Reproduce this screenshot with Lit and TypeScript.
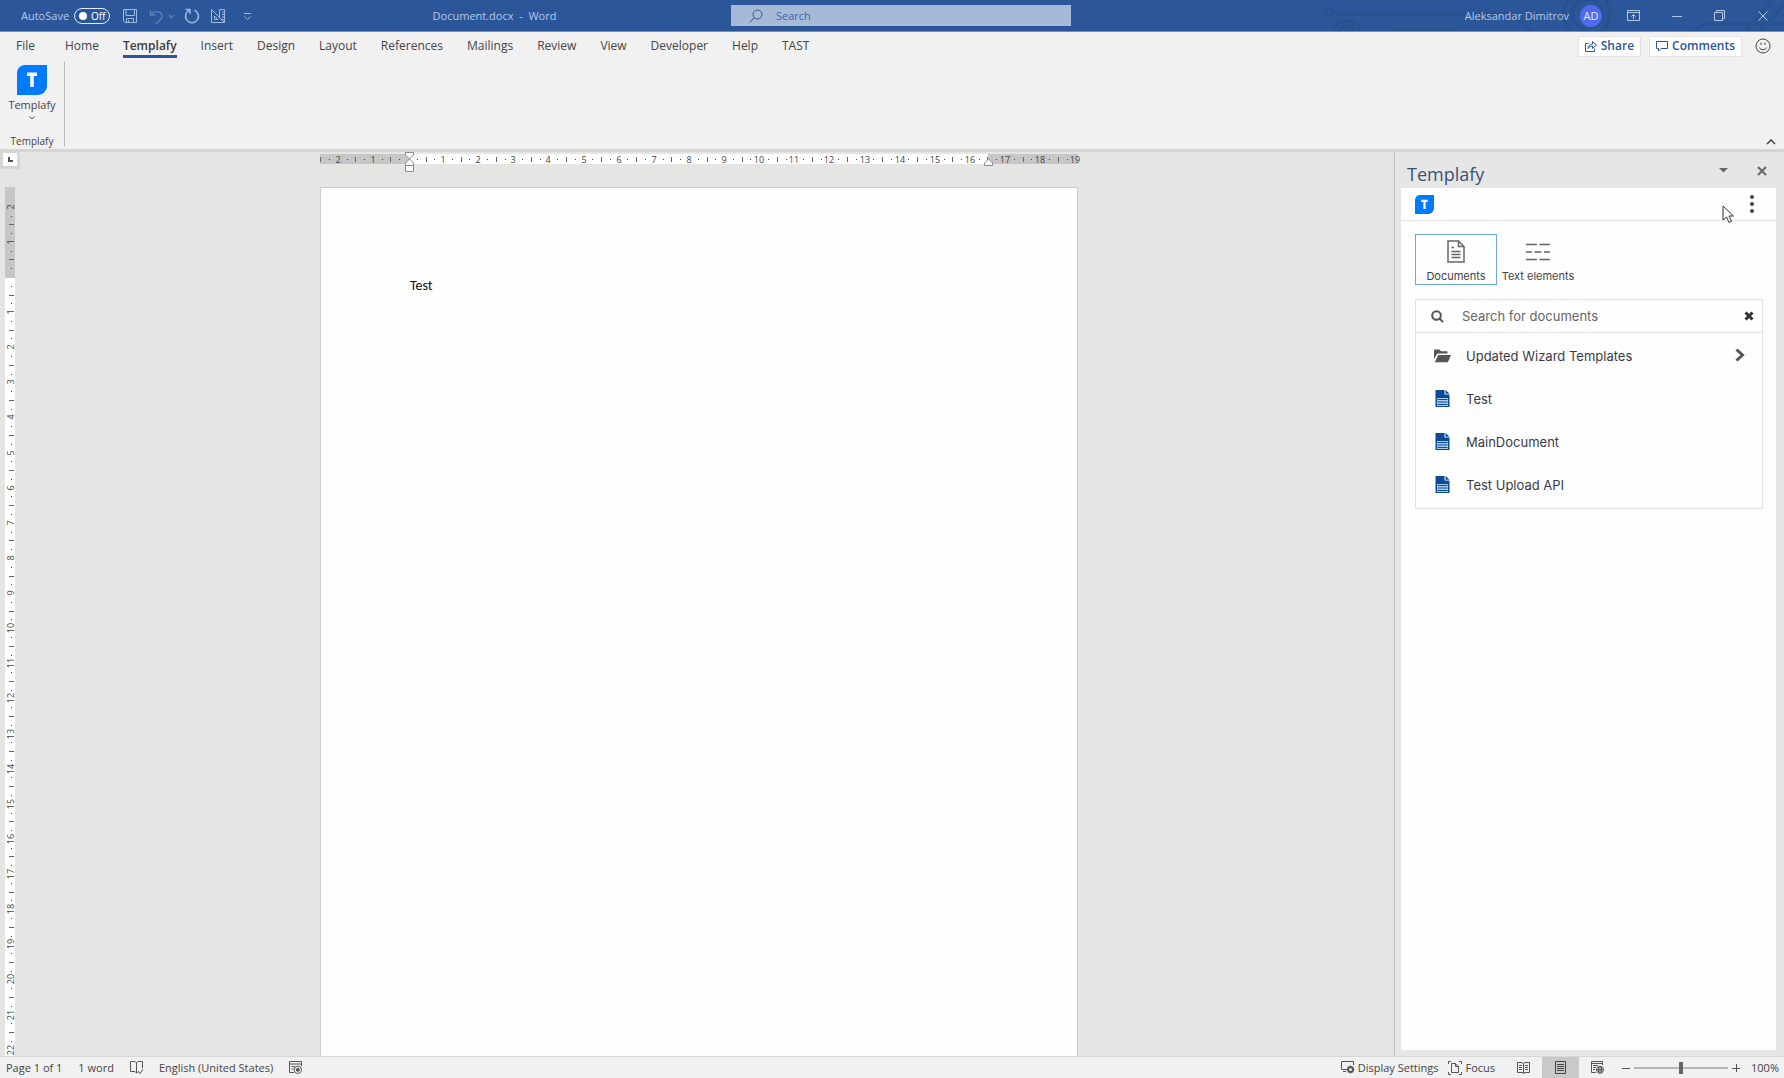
import { LitElement, html, css, svg } from "lit";
import { customElement, state } from "lit/decorators.js";
import { classMap } from "lit/directives/class-map.js";

const TABS = [
  "File", "Home", "Templafy", "Insert", "Design", "Layout", "References",
  "Mailings", "Review", "View", "Developer", "Help", "TAST",
];

const DOCUMENTS = ["Test", "MainDocument", "Test Upload API"];

/* Pixels per centimetre on both rulers at 100% zoom. */
const CM = 35.12;

const quarterMarks = (from: number, to: number) => {
  const marks: { at: number; kind: "number" | "half" | "dot"; label: number }[] = [];
  for (let q = from; q <= to; q++) {
    if (q === 0) continue;
    const kind = q % 4 === 0 ? "number" : q % 2 === 0 ? "half" : "dot";
    marks.push({ at: Math.round((q * CM) / 4), kind, label: Math.abs(q / 4) });
  }
  return marks;
};

const logo = (size: number) => svg`
  <svg width=${size} height=${size} viewBox="0 0 30 30" aria-hidden="true">
    <path d="M8 0H30V21A9 9 0 0 1 21 30H0V8A8 8 0 0 1 8 0Z" fill="#007bff"/>
    <path d="M10 9.200H20M15 9.200V22" stroke="#fff" stroke-width="3.600" fill="none"/>
  </svg>`;

@customElement("app-root")
export class AppRoot extends LitElement {
  @state() private activeTab = "Templafy";
  @state() private section = "Documents";

  static styles = css`
    :host {
      display: flex;
      flex-direction: column;
      height: 100vh;
      overflow: hidden;
      background: #e5e5e4;
      color: #444;
      font: 12px/16px "Open Sans", "Noto Sans", sans-serif;
    }
    * { box-sizing: border-box; }
    button, input {
      font: inherit;
      color: inherit;
      border: 0;
      margin: 0;
      padding: 0;
      background: none;
    }
    svg { display: block; fill: none; flex: none; }
    h1, h2, p, ul { margin: 0; padding: 0; font-weight: 400; list-style: none; }

    /* Title bar */
    .titlebar {
      position: relative;
      display: grid;
      grid-template-columns: 1fr 340px 1fr;
      align-items: center;
      height: 32px;
      padding-left: 18px;
      flex: none;
      background: #2b579a;
      border-bottom: 1px solid #6f8fc0;
      color: #b4c8e6;
      font-size: 11px;
    }
    .pattern { position: absolute; top: 0; right: 0; }
    .quick { display: flex; align-items: center; height: 31px; padding-left: 3px; }
    .quick svg { stroke: #9db9e0; }
    .toggle {
      display: flex;
      align-items: center;
      gap: 4px;
      width: 36px;
      height: 16px;
      margin: 0 12px 0 5px;
      padding-left: 4px;
      border: 1px solid #e4ecf8;
      border-radius: 8px;
      color: #fff;
      font-size: 10px;
      line-height: 14px;
    }
    .knob { width: 8px; height: 8px; border-radius: 50%; background: #fff; }
    .tools { display: flex; align-items: center; gap: 10px; }
    .faded { opacity: 0.4; }
    .docname { flex: 1; text-align: center; font-size: 11px; white-space: pre; }
    .search {
      display: flex;
      align-items: center;
      gap: 13px;
      height: 21px;
      padding-left: 18px;
      background: #a6bad7;
      color: #2b579a;
    }
    .search input { flex: 1; min-width: 0; outline: none; }
    .search input::placeholder { color: #3d68ad; opacity: 1; }
    .account { position: relative; display: flex; justify-content: flex-end; align-items: center; }
    .avatar {
      width: 22px;
      height: 22px;
      margin: 0 10px 0 11px;
      border-radius: 50%;
      background: #4f6bed;
      color: #e8edff;
      line-height: 22px;
      text-align: center;
    }
    .winbtn { display: flex; justify-content: center; align-items: center; width: 43px; height: 31px; }
    .winbtn svg { stroke: #b4c8e6; }

    /* Ribbon */
    .ribbon {
      display: flex;
      flex-direction: column;
      flex: none;
      height: 120px;
      background: #f1f1f2;
      border-bottom: 3px solid #d5d5d4;
    }
    .tabrow { display: flex; align-items: center; height: 28px; padding: 0 13px 0 4px; }
    .tabs { display: flex; flex: 1; }
    .tab { padding: 2px 12px 0; height: 28px; color: #444; }
    .tab:first-child { padding-right: 18px; }
    .tab span { display: block; padding: 2px 0 1px; border-bottom: 3px solid transparent; }
    .tab.active { font-weight: 600; color: #3b3b3b; }
    .tab.active span { border-color: #2b579a; }
    .action {
      display: flex;
      align-items: center;
      gap: 4px;
      height: 21px;
      margin-right: 8px;
      padding: 0 6px;
      border: 1px solid #e3e3e5;
      background: #fff;
      color: #2b579a;
      font-weight: 600;
    }
    .smile { margin-left: 5px; }
    .groups { display: flex; flex: 1; align-items: flex-end; justify-content: space-between; }
    .group {
      display: flex;
      flex-direction: column;
      align-items: center;
      justify-content: space-between;
      width: 65px;
      height: 84px;
      margin-bottom: 3px;
      border-right: 1px solid #b9b9b9;
      font-size: 11px;
    }
    .group button { display: flex; flex-direction: column; align-items: center; padding-top: 3px; }
    .group button span { margin: 2px 0 3px; }
    .group p { font-size: 10px; line-height: 10px; }
    .collapse { padding: 0 8px 4px 0; }

    /* Workspace */
    .workspace { display: flex; flex: 1; min-height: 0; }
    .editor { display: flex; flex-direction: column; flex: 1; min-width: 0; }
    .hrow { display: flex; height: 17px; flex: none; padding-right: 16px; }
    .corner { width: 20px; height: 17px; padding: 1px 3px 3px; background: #d6d6d6; }
    .corner button { display: grid; place-items: center; width: 14px; height: 13px; background: #fff; }
    .hcenter { display: flex; flex: 1; justify-content: center; }
    .ruler { overflow: visible; }
    .ruler text { font-size: 9px; fill: #444; text-anchor: middle; }
    .vrow { display: flex; flex: 1; min-height: 0; padding: 18px 16px 0 0; }
    .vruler { width: 20px; padding-left: 5px; overflow: hidden; }
    .canvas { display: flex; flex: 1; justify-content: center; }
    .page {
      width: 758px;
      padding: 89px 89px;
      background: #fefefe;
      border: 1px solid #cdcdcf;
      border-bottom: 0;
      color: #111;
      font: 14px/18px Carlito, Lato, sans-serif;
    }

    /* Task pane */
    .pane {
      display: flex;
      flex-direction: column;
      width: 390px;
      padding: 11px 8px 6px 6px;
      border-left: 1px solid #c2c2c4;
      background: #e6e6e5;
    }
    .panehead { display: flex; align-items: flex-start; height: 25px; padding: 0 9px 0 6px; }
    .panehead h2 { flex: 1; font-size: 18px; line-height: 22px; color: #3a5277; }
    .panehead button { padding: 3px 0; margin-left: 29px; }
    .body { flex: 1; background: #fefefe; }
    .brand {
      display: flex;
      align-items: center;
      justify-content: space-between;
      height: 33px;
      padding: 0 22px 0 14px;
      border-bottom: 1px solid #e0e0e6;
    }
    .dots circle { fill: #444; }
    .sections { display: flex; padding: 13px 14px 14px; }
    .section {
      display: flex;
      flex-direction: column;
      align-items: center;
      width: 82px;
      height: 51px;
      padding-top: 5px;
      border: 1px solid transparent;
      color: #444;
      font: 11px/14px Inter, sans-serif;
      white-space: nowrap;
    }
    .section.active { border-color: #6ba6de; }
    .section svg { margin-bottom: 6px; }
    .library { margin: 0 13px 0 14px; border: 1px solid #e0e0e6; color: #444; font: 13px/20px Inter, sans-serif; }
    .find { display: flex; align-items: center; height: 33px; padding: 0 8px 0 15px; border-bottom: 1px solid #e0e0e6; }
    .find input { flex: 1; min-width: 0; padding-left: 18px; outline: none; }
    .find input::placeholder { color: #666; opacity: 1; }
    .item { display: flex; align-items: center; width: 100%; height: 43px; padding: 0 17px 0 18px; text-align: left; color: #3a3a44; }
    .item span { flex: 1; padding-left: 15px; }
    .list { padding: 1px 0 2px; }
    .cursor { position: absolute; top: 205px; right: 49px; }

    /* Status bar */
    .status {
      display: flex;
      align-items: center;
      flex: none;
      height: 22px;
      padding: 0 5px 0 6px;
      border-top: 1px solid #d6d6d4;
      background: #f1f1f2;
      font-size: 11px;
    }
    .status button { display: flex; align-items: center; gap: 3px; height: 21px; }
    .left, .right { display: flex; align-items: center; }
    .left { flex: 1; gap: 16px; }
    .focus { margin: 0 10px; }
    .status .view { justify-content: center; width: 37px; }
    .view.active { background: #c9c9c9; }
    .zoomout { margin: 0 4px 0 6px; }
    .zoomin { margin: 0 11px 0 4px; }
    .zoom { appearance: none; width: 94px; height: 12px; }
    .zoom::-webkit-slider-runnable-track {
      height: 12px;
      background: linear-gradient(#b5b5b5, #b5b5b5) center / 100% 2px no-repeat;
    }
    .zoom::-webkit-slider-thumb { appearance: none; width: 4px; height: 12px; background: #666; }
  `;

  private hruler() {
    return svg`
      <svg class="ruler" width="758" height="17" role="img" aria-label="Horizontal ruler">
        <rect x="0" y="2" width="758" height="10" fill="#fff"/>
        <rect x="0" y="2" width="89" height="10" fill="#c6c6c6"/>
        <rect x="668" y="2" width="90" height="10" fill="#c6c6c6"/>
        ${quarterMarks(-10, 76).map((m) => {
          const x = 89 + m.at;
          if (m.kind === "number") return svg`<text x=${x - 1} y="11">${m.label}</text>`;
          if (m.kind === "half") return svg`<rect x=${x - 1} y="5" width="1" height="5" fill="#666"/>`;
          return svg`<rect x=${x - 1} y="7" width="1" height="1" fill="#444"/>`;
        })}
        <g fill="#fff" stroke="#8a8a8a">
          <path d="M85.500 0.500H93.500V3L89.500 7L85.500 3Z"/>
          <path d="M85.500 13.500V11L89.500 7L93.500 11V13.500Z"/>
          <path d="M85.500 13.500H93.500V19.500H85.500Z"/>
          <path d="M664.500 13.500V11L668.500 7L672.500 11V13.500Z"/>
        </g>
      </svg>`;
  }

  private vruler() {
    return svg`
      <svg class="ruler" width="10" height="1200" role="img" aria-label="Vertical ruler">
        <rect width="10" height="1200" fill="#fff"/>
        <rect width="10" height="91" fill="#c6c6c6"/>
        ${quarterMarks(-8, 88).map((m) => {
          const y = 90 + m.at;
          if (m.kind === "number")
            return svg`<text transform="translate(9 ${y}) rotate(-90)">${m.label}</text>`;
          if (m.kind === "half") return svg`<rect x="4" y=${y} width="5" height="1" fill="#666"/>`;
          return svg`<rect x="6" y=${y} width="1" height="1" fill="#444"/>`;
        })}
      </svg>`;
  }

  private titlebar() {
    return html`
      <header class="titlebar">
        <svg class="pattern" width="520" height="31" stroke="#285190" stroke-width="3" aria-hidden="true">
          <circle cx="65" cy="12" r="4"/><path d="M69 14H250"/>
          <path d="M70 31A13 10 0 0 1 96 31M76 31A7 5 0 0 1 90 31"/>
          <path d="M130 30H190"/><path d="M246 14L268 31"/>
          <circle cx="323" cy="14" r="23"/><circle cx="323" cy="14" r="15"/>
          <path d="M430 31L440 24H520M482 31L508 0M496 31L520 5"/>
        </svg>
        <div class="quick">
          <span id="autosave">AutoSave</span>
          <button class="toggle" role="switch" aria-checked="false" aria-labelledby="autosave"><i class="knob"></i>Off</button>
          <div class="tools">
            <button aria-label="Save">
              <svg width="16" height="16"><path d="M1.500 1.500H14.500V14.500H3L1.500 13ZM4 1.500V7.500H12.500V1.500M4.500 14V10.500H11.500V14M6.500 14V12"/></svg>
            </button>
            <button class="faded" aria-label="Undo">
              <svg width="26" height="16"><path stroke-width="1.500" d="M2.500 2V7H7.500M3 6.500C6 2.500 14 2.500 14 8.500C14 11 11.500 13 7.500 15.500M21 7L23.500 9.500L26 7"/></svg>
            </button>
            <button aria-label="Repeat">
              <svg width="16" height="16"><path stroke-width="1.500" d="M1.500 1.500H6V6M5.500 2.200A6.500 6.500 0 1 0 10.500 2.200"/></svg>
            </button>
            <button aria-label="Ruler and set square">
              <svg width="16" height="16"><path d="M1.500 1.500V14.500H14.500ZM4.500 8V11.500H8ZM9.500 1.500H14.500V14.500M9.500 1.500V9M12 4H14.500M12 6.500H14.500M12 9H14.500M12 11.500H14.500"/></svg>
            </button>
            <button aria-label="Customize Quick Access Toolbar">
              <svg width="22" height="16"><path d="M8 5.500H15M8.500 8.500L11.500 11.500L14.500 8.500"/></svg>
            </button>
          </div>
          <h1 class="docname">Document.docx  -  Word</h1>
        </div>
        <label class="search">
          <svg width="14" height="14" stroke="#2b579a"><circle cx="8.500" cy="5.500" r="4.500"/><path d="M5.300 8.700L0.500 13.500"/></svg>
          <input type="text" placeholder="Search" aria-label="Search" />
        </label>
        <div class="account">
          <span>Aleksandar Dimitrov</span>
          <span class="avatar">AD</span>
          <button class="winbtn" aria-label="Ribbon Display Options">
            <svg width="13" height="11"><path d="M0.500 0.500H12.500V10.500H0.500ZM0.500 2.500H12.500M6.500 9V4.500M4.500 6.500L6.500 4.500L8.500 6.500"/></svg>
          </button>
          <button class="winbtn" aria-label="Minimize"><svg width="10" height="10"><path d="M0 5.500H10"/></svg></button>
          <button class="winbtn" aria-label="Restore">
            <svg width="11" height="11"><path d="M0.500 2.500H8.500V10.500H0.500ZM2.500 2.500V0.500H10.500V8.500H8.500"/></svg>
          </button>
          <button class="winbtn" aria-label="Close"><svg width="10" height="10"><path d="M0.500 0.500L9.500 9.500M9.500 0.500L0.500 9.500"/></svg></button>
        </div>
      </header>`;
  }

  private ribbon() {
    return html`
      <section class="ribbon">
        <div class="tabrow">
          <nav class="tabs">
            ${TABS.map((t) => html`
              <button class=${classMap({ tab: true, active: t === this.activeTab })}
                @click=${() => (this.activeTab = t)}><span>${t}</span></button>`)}
          </nav>
          <button class="action">
            <svg width="12" height="12" stroke="#2b579a"><path d="M3.500 3.500H0.500V11.500H9.500V8.500M3 8.500C3.500 5.500 5 4 7.500 4V1.500L11.500 5L7.500 8.500V6C5.500 6 4 7 3 8.500Z"/></svg>Share
          </button>
          <button class="action">
            <svg width="12" height="11" stroke="#2b579a"><path d="M0.500 0.500H11.500V7.500H5L2.500 10V7.500H0.500Z"/></svg>Comments
          </button>
          <button class="smile" aria-label="Feedback">
            <svg width="16" height="16" stroke="#444"><circle cx="8" cy="8" r="7"/><path d="M4.500 9.500C5.500 12.500 10.500 12.500 11.500 9.500M6 4.500V7M10 4.500V7"/></svg>
          </button>
        </div>
        <div class="groups">
          <div class="group">
            <button>${logo(30)}<span>Templafy</span>
              <svg width="6" height="4" stroke="#555"><path d="M0.500 0.500L3 3L5.500 0.500"/></svg>
            </button>
            <p>Templafy</p>
          </div>
          <button class="collapse" aria-label="Collapse the Ribbon">
            <svg width="10" height="6" stroke="#444" stroke-width="1.500"><path d="M1 5L5 1L9 5"/></svg>
          </button>
        </div>
      </section>`;
  }

  private pane() {
    const sections = [
      {
        name: "Documents",
        icon: svg`<svg width="18" height="23" stroke="#666" stroke-width="1.500"><path d="M1 1H11.500L17 6.500V22H1ZM11.500 1V6.500H17M4.500 7.500H7M4.500 11.500H13.500M4.500 14.500H13.500M4.500 17.500H13.500"/></svg>`,
      },
      {
        name: "Text elements",
        icon: svg`<svg width="24" height="23" stroke="#666" stroke-width="1.500"><path d="M0 4.500H11M13.500 4.500H24M0 12H6M8.500 12H15.500M18 12H24M0 19.500H11M13.500 19.500H24"/></svg>`,
      },
    ];
    return html`
      <aside class="pane">
        <div class="panehead">
          <h2>Templafy</h2>
          <button aria-label="Task Pane Options"><svg width="9" height="8"><path d="M0 2H9L4.500 6.500Z" fill="#666"/></svg></button>
          <button aria-label="Close pane"><svg width="10" height="10" stroke="#666" stroke-width="2"><path d="M1 1L9 9M9 1L1 9"/></svg></button>
        </div>
        <div class="body">
          <div class="brand">
            ${logo(19)}
            <button aria-label="More"><svg class="dots" width="4" height="18"><circle cx="2" cy="2" r="2"/><circle cx="2" cy="9" r="2"/><circle cx="2" cy="16" r="2"/></svg></button>
          </div>
          <div class="sections">
            ${sections.map((s) => html`
              <button class=${classMap({ section: true, active: s.name === this.section })}
                @click=${() => (this.section = s.name)}>${s.icon}${s.name}</button>`)}
          </div>
          <div class="library">
            <div class="find">
              <svg width="13" height="13" stroke="#555" stroke-width="2"><circle cx="5.500" cy="5.500" r="4.300"/><path d="M8.500 8.500L12 12"/></svg>
              <input type="text" placeholder="Search for documents" aria-label="Search for documents" />
              <button aria-label="Clear search"><svg width="10" height="10" stroke="#333" stroke-width="3"><path d="M1.500 1.500L8.500 8.500M8.500 1.500L1.500 8.500"/></svg></button>
            </div>
            <ul class="list">
              <li>
                <button class="item">
                  <svg width="17" height="14"><path fill="#555" d="M0 10.500V1.500Q0 0.500 1 0.500H5.500L7 2.200H12.500Q13.500 2.200 13.500 3.200V4.500H4.200Q3.200 4.500 2.700 5.300ZM4.300 6H17L14.200 12.500Q13.900 13.300 13 13.300H0.700Z"/></svg>
                  <span>Updated Wizard Templates</span>
                  <svg width="10" height="16" stroke="#555" stroke-width="3"><path d="M1.500 1.500L7.500 7L1.500 12.500"/></svg>
                </button>
              </li>
              ${DOCUMENTS.map((d) => html`
                <li>
                  <button class="item">
                    <svg width="17" height="17">
                      <path d="M1.500 0H10.500V4.500H15.500V17H1.500Z" fill="#0a4b96"/>
                      <path d="M11.500 0L15.500 3.700H11.500Z" fill="#0a4b96"/>
                      <path d="M3 8H14V16H3Z" fill="#a9cbee"/>
                      <path d="M3.500 9.500H13.500M3.500 12H13.500M3.500 14.500H13.500" stroke="#0a4b96"/>
                    </svg>
                    <span>${d}</span>
                  </button>
                </li>`)}
            </ul>
          </div>
        </div>
      </aside>`;
  }

  private status() {
    return html`
      <footer class="status">
        <div class="left">
          <span>Page 1 of 1</span>
          <span>1 word</span>
          <button aria-label="Proofing">
            <svg width="13" height="13" stroke="#555"><path d="M6.500 2V12L5 10.500H0.500V0.500H5L6.500 2L8 0.500H12.500V7M6.500 12L8.500 10.500L10 12.500L13 8"/></svg>
          </button>
          <button>English (United States)</button>
          <button aria-label="Macro recording">
            <svg width="13" height="13" stroke="#555"><path d="M5 11.500H0.500V0.500H12.500V5M0.500 3H12.500M2.500 5.500H5.500M2.500 8H4.500" /><circle cx="8.800" cy="8.800" r="3.700"/><circle cx="8.800" cy="8.800" r="1.500" fill="#555"/></svg>
          </button>
        </div>
        <div class="right">
          <button>
            <svg width="14" height="13" stroke="#555"><path d="M6 8.500H0.500V0.500H12.500V4M2 10.500H5"/><circle cx="9.500" cy="8.500" r="2.500" stroke-width="2"/><path d="M9.500 4.500V6M9.500 11V12.500M5.500 8.500H7M12 8.500H13.500M6.800 5.800L7.800 6.800M12.200 5.800L11.200 6.800M6.800 11.200L7.800 10.200M12.200 11.200L11.200 10.200"/></svg>
            Display Settings
          </button>
          <button class="focus">
            <svg width="14" height="14" stroke="#555"><path d="M3 0.500H0.500V3M11 0.500H13.500V3M3 13.500H0.500V11M11 13.500H13.500V11M3.500 2.500H7.500L10.500 5.500V11.500H3.500ZM7.500 2.500V5.500H10.500"/></svg>
            Focus
          </button>
          <button class="view" aria-label="Read Mode">
            <svg width="13" height="12" stroke="#555"><path d="M6.500 1.500V11.500M0.500 0.500H5L6.500 1.500L8 0.500H12.500V10.500H8L6.500 11.500L5 10.500H0.500ZM2 3.500H5M2 5.500H5M2 7.500H5M8 3.500H11M8 5.500H11M8 7.500H11"/></svg>
          </button>
          <button class="view active" aria-label="Print Layout" aria-pressed="true">
            <svg width="11" height="13" stroke="#444"><path d="M0.500 0.500H10.500V12.500H0.500ZM2 3.500H9M2 5.500H9M2 7.500H9M2 9.500H9"/></svg>
          </button>
          <button class="view" aria-label="Web Layout">
            <svg width="13" height="13" stroke="#555"><path d="M5 11.500H0.500V0.500H11.500V4M0.500 2.500H11.500M2 4.500H7M2 6.500H5M2 8.500H4"/><circle cx="9" cy="8.800" r="3.500"/><path d="M5.500 8.800H12.500M9 5.300V12.300M7.500 6V11.500M10.500 6V11.500"/></svg>
          </button>
          <button class="zoomout" aria-label="Zoom out"><svg width="8" height="8" stroke="#555"><path d="M0 4.500H8"/></svg></button>
          <input class="zoom" type="range" min="0" max="200" value="100" aria-label="Zoom" />
          <button class="zoomin" aria-label="Zoom in"><svg width="8" height="8" stroke="#555"><path d="M0 4.500H8M4.500 0V8"/></svg></button>
          <button>100%</button>
        </div>
      </footer>`;
  }

  render() {
    return html`
      ${this.titlebar()}
      ${this.ribbon()}
      <main class="workspace">
        <div class="editor">
          <div class="hrow">
            <div class="corner">
              <button aria-label="Tab selector"><svg width="5" height="5" stroke="#555" stroke-width="2"><path d="M1 0V4H5"/></svg></button>
            </div>
            <div class="hcenter">${this.hruler()}</div>
          </div>
          <div class="vrow">
            <div class="vruler">${this.vruler()}</div>
            <div class="canvas"><article class="page"><p>Test</p></article></div>
          </div>
        </div>
        ${this.pane()}
      </main>
      ${this.status()}
      <svg class="cursor" width="13" height="19" aria-hidden="true">
        <path d="M1 1V15L4.500 12L7 17.500L9.500 16.500L7 11H11.500Z" fill="#fff" stroke="#333"/>
      </svg>
    `;
  }
}
